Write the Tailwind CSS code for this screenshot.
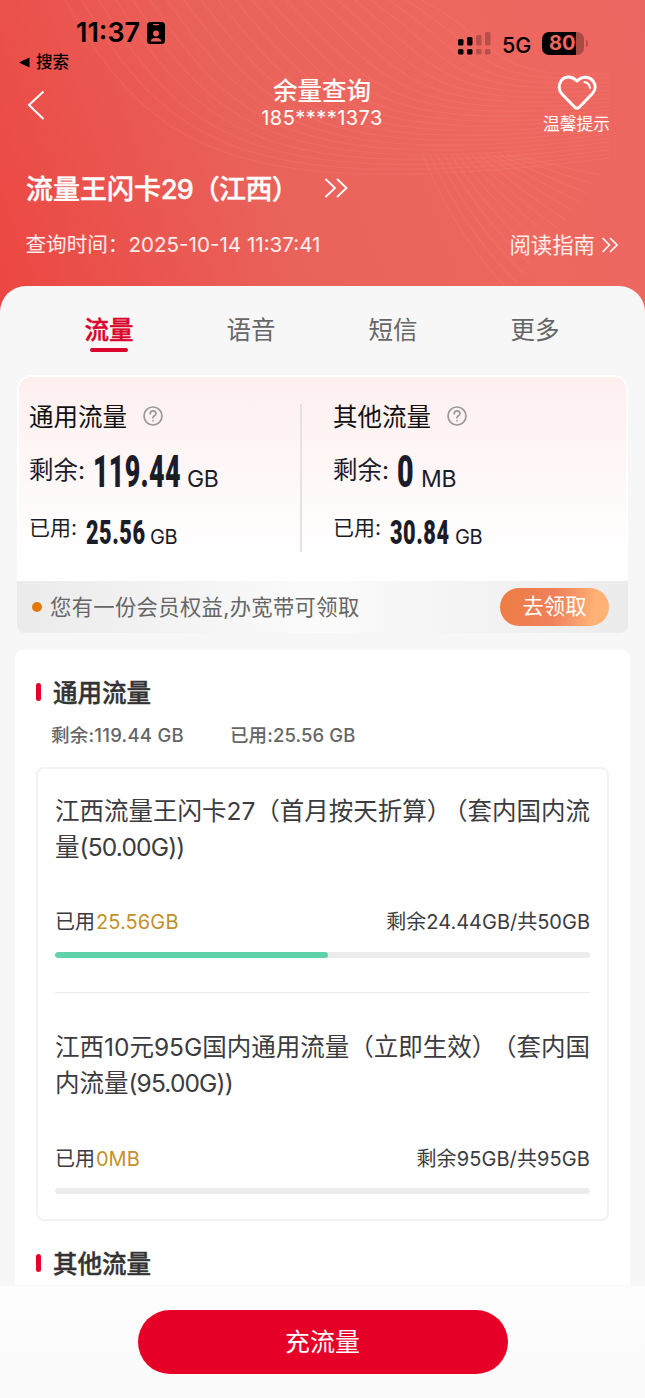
<!DOCTYPE html>
<html lang="zh-CN">
<head>
<meta charset="utf-8">
<title>余量查询</title>
<script src="https://cdn.jsdelivr.net/npm/@tailwindcss/browser@4"></script>
</head>
<body class="w-[645px] h-[1398px] overflow-hidden bg-[#f7f7f7] font-['Inter','Noto_Sans_CJK_SC',sans-serif] whitespace-nowrap text-[#333]">
<div class="relative flex h-[1398px] flex-col">
  <!-- header -->
  <header class="relative flex h-[326px] shrink-0 flex-col overflow-hidden bg-linear-[70deg,#ec4541_0%,#e9635b_42%,#ee685f_75%,#ed6560_100%] text-white">
    <svg class="absolute inset-0" width="645" height="326" fill="none" stroke="#ff9c8c" stroke-opacity=".13" stroke-width="1.5">
      <g id="waves"></g>
    </svg>
    <div class="relative flex h-[50px] items-center justify-between pl-[76px] pr-[57px] pt-[16px] text-black">
      <div class="flex items-center gap-[6px]">
        <span class="w-[65px] text-[27px] leading-[30px] font-semibold">11:37</span>
        <svg width="18" height="22" viewBox="0 0 18 22"><rect width="18" height="22" rx="3.500" fill="#000"/><rect x="6" y="2" width="6" height="1.300" rx=".6" fill="#e95f58"/><circle cx="9" cy="11.500" r="3" fill="#e95f58"/><path d="M3.800 19.500c0-3 2.600-3.500 5.200-3.500s5.200.5 5.200 3.500z" fill="#e95f58"/></svg>
      </div>
      <div class="mt-[21px] flex items-center">
        <svg width="33" height="23" viewBox="0 0 33 23"><g fill="#000"><rect x="0" y="7" width="5.500" height="6.500" rx="1.500"/><rect x="9" y="5" width="5.500" height="8.500" rx="1.500"/><rect x="0" y="17" width="5.500" height="5.500" rx="1.500"/><rect x="9" y="17" width="5.500" height="5.500" rx="1.500"/></g><g fill="#b94f4a"><rect x="18" y="3" width="5.500" height="10.500" rx="1.500"/><rect x="27" y="0" width="5.500" height="13.500" rx="1.500"/><rect x="18" y="17" width="5.500" height="5.500" rx="1.500"/><rect x="27" y="17" width="5.500" height="5.500" rx="1.500"/></g></svg>
        <span class="ml-[11px] mt-[2px] w-[30px] text-[21.5px] leading-[24px] font-medium">5G</span>
        <div class="relative ml-[10px] h-[23px] w-[42px] overflow-hidden rounded-[7px] bg-linear-[90deg,#000_82%,#a94a45_82%]">
          <span class="absolute left-[7px] top-0 text-[20px] leading-[23px] font-bold text-[#ee675f]">80</span>
        </div>
        <div class="ml-[2px] h-[7px] w-[2px] rounded-r-full bg-[#b94f4a]"></div>
      </div>
    </div>
    <div class="relative flex h-[24px] items-center gap-[6px] pl-[19px] text-black">
      <svg width="11" height="11" viewBox="0 0 11 11"><path d="M0 5.500 10.500.500v10z"/></svg>
      <span class="text-[16.5px] leading-[20px] font-medium">搜索</span>
    </div>
    <div class="relative grid h-[68px] grid-cols-[200px_1fr_200px]">
      <div class="pl-[27px] pt-[16px]"><svg width="18" height="30" fill="none" stroke="#fff" stroke-width="2"><path d="M16.500 1.500 2 15l14.500 14"/></svg></div>
      <div class="flex flex-col items-center pr-[1px]">
        <h1 class="mt-[3px] text-[24.5px] leading-[28px] font-medium">余量查询</h1>
        <span class="text-[20px] leading-[26px] tracking-[0.45px]">185****1373</span>
      </div>
      <div class="flex flex-col items-center pl-[63px]">
        <svg class="mt-[1px]" width="40" height="36" viewBox="0 0 40 36" fill="none" stroke="#fff" stroke-width="3" stroke-linecap="round" stroke-linejoin="round"><path d="M20 6C14 0 7 1.500 4 6s-2 10 1 13l13 13.500q2 1.500 4 0L35 19c4-4 4-9 1-13s-10-6-16 0z"/><path d="M27.500 7q5 1 5.500 6" stroke-width="2"/></svg>
        <span class="mt-[3px] text-[16.8px] leading-[20px]">温馨提示</span>
      </div>
    </div>
    <div class="relative flex h-[92px] items-center pl-[26px]">
      <h2 class="mt-[3px] w-[298px] text-[27px] leading-[36px] font-medium [-webkit-text-stroke:0.4px_currentColor]">流量王闪卡<span class="tracking-[-1px]">29</span><span class="tracking-[-0.6px]">（江西）</span></h2>
      <svg width="24" height="20" fill="none" stroke="#fff" stroke-width="1.800"><path d="m1.500 1 9.500 9-9.500 9M13 1l9.500 9L13 19"/></svg>
    </div>
    <div class="relative flex h-[22px] items-center justify-between pl-[25.5px] pr-[27px] text-white/90">
      <span class="text-[20.6px] leading-[22px]">查询时间：<span>2025-10-14 11:37:41</span></span>
      <span class="flex items-center gap-[6px] text-[21.4px] leading-[20px]">阅读指南
        <svg width="17" height="16" fill="none" stroke="#fff" stroke-width="1.600"><path d="m1.500 1 7 7-7 7M9 1l7 7-7 7"/></svg></span>
    </div>
  </header>

  <main class="relative -mt-[40px] flex h-[1112px] flex-col rounded-t-[26px] bg-[#f7f7f7]">
    <nav class="flex h-[89px] pl-[38px] pr-[39px] pt-[26px] text-[24.5px] leading-[36px] text-[#666]">
      <div class="flex w-[142px] flex-col items-center font-medium text-[#d9052c] [-webkit-text-stroke:0.4px_currentColor]">流量<i class="h-[3.500px] w-[38px] rounded-full bg-[#d9052c]"></i></div>
      <div class="w-[142px] text-center">语音</div>
      <div class="w-[142px] text-center">短信</div>
      <div class="w-[142px] text-center">更多</div>
    </nav>

    <!-- summary -->
    <section class="mx-[17px] h-[258px] overflow-hidden rounded-[14px] rounded-b-[8px]">
      <div class="flex h-[206px] rounded-t-[14px] border-2 border-b-0 border-white bg-linear-to-b from-[#feefef] to-white to-90% text-[#1c1c28]">
        <div class="w-[281px] pl-[10px] pt-[22px]">
          <div class="flex h-[36px] items-center gap-[16px] text-[24.5px] text-[#111]">通用流量<svg class="-mt-[2px]" width="20" height="20" viewBox="0 0 20 20" fill="none" stroke="#999" stroke-width="1.700" stroke-linecap="round"><circle cx="10" cy="10" r="9"/><path d="M7.200 7.800c0-4 5.800-3.800 5.800-.4 0 2-3 2.200-3 4.400M10 14.700v.1"/></svg></div>
          <div class="-mt-[7px] flex h-[72px] items-baseline leading-[72px]"><span class="w-[64px] text-[24.5px]">剩余:</span><span class="relative top-[8px] w-[94px]"><b class="inline-block origin-left scale-x-[0.61] font-['Roboto'] text-[44px] font-black tracking-[0.5px]">119.44</b></span><span class="relative top-[8px] text-[23px] tracking-[-0.5px]">GB</span></div>
          <div class="mt-[2px] flex h-[48px] items-baseline leading-[44px]"><span class="relative -top-[1px] w-[57px] text-[21px]">已用:</span><span class="relative top-[8px] w-[64px]"><b class="inline-block origin-left scale-x-[0.64] font-['Roboto'] text-[34px] font-black tracking-[0.8px]">25.56</b></span><span class="relative top-[8px] text-[20px] tracking-[-0.5px]">GB</span></div>
        </div>
        <div class="mt-[27px] h-[148px] w-[2px] bg-[#e6e2e4]"></div>
        <div class="pl-[31px] pt-[22px]">
          <div class="flex h-[36px] items-center gap-[16px] text-[24.5px] text-[#111]">其他流量<svg class="-mt-[2px]" width="20" height="20" viewBox="0 0 20 20" fill="none" stroke="#999" stroke-width="1.700" stroke-linecap="round"><circle cx="10" cy="10" r="9"/><path d="M7.200 7.800c0-4 5.800-3.800 5.800-.4 0 2-3 2.200-3 4.400M10 14.700v.1"/></svg></div>
          <div class="-mt-[7px] flex h-[72px] items-baseline leading-[72px]"><span class="w-[64px] text-[24.5px]">剩余:</span><span class="relative top-[8px] w-[24px]"><b class="inline-block origin-left scale-x-[0.65] font-['Roboto'] text-[44px] font-black">0</b></span><span class="relative top-[8px] text-[23px] tracking-[-0.3px]">MB</span></div>
          <div class="mt-[2px] flex h-[48px] items-baseline leading-[44px]"><span class="relative -top-[1px] w-[57px] text-[21px]">已用:</span><span class="relative top-[8px] w-[65px]"><b class="inline-block origin-left scale-x-[0.64] font-['Roboto'] text-[34px] font-black tracking-[0.8px]">30.84</b></span><span class="relative top-[8px] text-[20px] tracking-[-0.5px]">GB</span></div>
        </div>
      </div>
      <div class="flex h-[52px] items-center bg-linear-to-r from-[#ebebeb] via-[#fbfbfb] to-[#ebebeb] pl-[15px] pr-[19px] text-[#666]">
        <i class="size-[10px] rounded-full bg-[#e17a0b]"></i>
        <span class="ml-[8px] text-[21.3px] leading-[30px] tracking-[0.35px]">您有一份会员权益,办宽带可领取</span>
        <button class="ml-auto h-[38px] w-[109px] rounded-full bg-linear-[100deg,#ee7c42,#ef805c_50%,#ffb275_85%] pb-[2px] text-[21.3px] leading-[34px] text-white">去领取</button>
      </div>
    </section>

    <!-- details -->
    <section class="mx-[15px] mt-[17px] h-[648px] rounded-t-[8px] bg-white px-[21px]">
      <h3 class="flex h-[84px] items-center text-[24.5px] font-medium [-webkit-text-stroke:0.4px_currentColor]"><i class="mr-[12px] h-[18px] w-[5px] rounded-full bg-[#e60027]"></i><span class="pt-[2px]">通用流量</span></h3>
      <div class="-mt-[11px] flex h-[26px] items-center pl-[15px] text-[18.5px] font-medium text-[#666]"><span class="w-[179px] tracking-[0.25px]">剩余:119.44 GB</span><span class="tracking-[0.1px]">已用:25.56 GB</span></div>
      <div class="mt-[18px] h-[454px] w-[573px] rounded-[8px] border-2 border-[#f2f2f5] px-[17px] text-[#3b3b40]">
        <div class="h-[224px] border-b border-[#ededed] pt-[24px]">
          <p class="text-[24.5px] leading-[36px]">江西流量王闪卡27（首月按天折算）<span class="ml-[4px]">（套内国内流</span><br>量<span class="tracking-[-0.8px]">(50.00G))</span></p>
          <div class="mt-[42px] flex h-[30px] items-center justify-between text-[20px]"><span>已用<span class="ml-[1px] tracking-[0.1px] text-[#c3912b]">25.56GB</span></span><span>剩余24.44GB/共50GB</span></div>
          <div class="mt-[15px] h-[6px] overflow-hidden rounded-full bg-[#ececec]"><div class="h-full w-[273px] rounded-full bg-[#60d2a9]"></div></div>
        </div>
        <div class="pt-[36px]">
          <p class="text-[24.5px] leading-[36px]">江西10元95G国内通用流量（立即生效）<span class="ml-[8px]">（套内国</span><br>内流量<span class="tracking-[-0.85px]">(95.00G))</span></p>
          <div class="mt-[43px] flex h-[30px] items-center justify-between text-[20px]"><span>已用<span class="ml-[1px] text-[#c3912b]">0MB</span></span><span class="tracking-[0.1px]">剩余95GB/共95GB</span></div>
          <div class="mt-[14px] h-[6px] rounded-full bg-[#ececec]"></div>
        </div>
      </div>
      <h3 class="flex h-[84px] items-center text-[24.5px] font-medium [-webkit-text-stroke:0.4px_currentColor]"><i class="mr-[12px] h-[18px] w-[5px] rounded-full bg-[#e60027]"></i><span class="pt-[2px]">其他流量</span></h3>
    </section>
  </main>

  <footer class="absolute inset-x-0 bottom-0 flex h-[113px] justify-center border-t border-[#f8f8f8] bg-linear-to-b from-[#fdfdfd] to-[#fafafb] pt-[24px]">
    <button class="h-[64px] w-[370px] rounded-full bg-[#e60027] text-[25px] leading-[60px] text-white">充流量</button>
  </footer>
</div>
<script>
  // decorative contour lines behind the header text
  let d = '';
  for (let i = 0; i < 22; i++) {
    d += `<path d="M${65 + i * 17} 0C${150 + i * 17} ${150 - i * 5} ${230 + i * 12} ${205 - i * 6} 610 ${158 - i * 4}"/>`;
  }
  for (let i = 0; i < 14; i++) {
    d += `<path d="M${423 + i * 7} 155Q${455 + i * 9} ${235 - i * 5} ${510 + i * 7} ${292 - i * 9}"/>`;
  }
  document.getElementById('waves').innerHTML = d;
</script>
</body>
</html>
